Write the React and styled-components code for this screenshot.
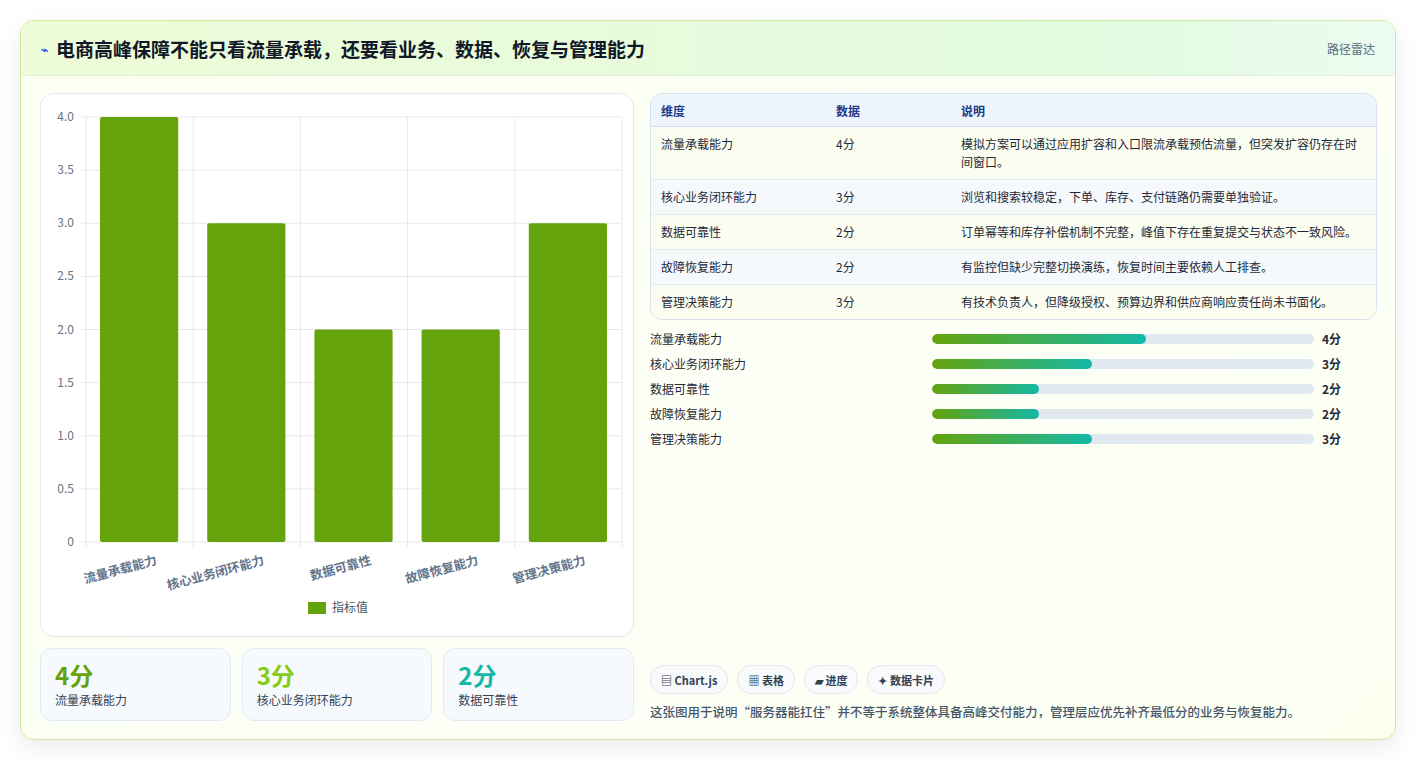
import React from "react";
import styled, { createGlobalStyle } from "styled-components";

const Global = createGlobalStyle`
  body { margin: 0; background: #f1f2f3; font-family: "Noto Sans CJK SC", "Noto Sans", sans-serif; }
`;

const Page = styled.div`
  width: 1417px; height: 760px; padding: 20px; box-sizing: border-box;
  background: #fff;
`;

const Card = styled.div`
  width: 1376px; height: 720px; box-sizing: border-box;
  border: 1px solid #cfe9a0; border-radius: 14px; overflow: hidden;
  background: linear-gradient(135deg, #fbfff2, #fdfff6 60%, #fbfff0);
  box-shadow: 0 8px 24px rgba(0,0,0,0.08);
  display: flex; flex-direction: column;
`;

const Header = styled.div`
  height: 55px; flex: none; box-sizing: border-box; padding: 0 20px;
  display: flex; align-items: center; justify-content: space-between;
  background: linear-gradient(90deg, #eefcd8, #e2fbe0 80%, #eafcf0);
  border-bottom: 1px solid #e3f0d6;
`;

const Title = styled.h1`
  margin: 0; font-size: 19px; font-weight: 700; color: #111827;
  display: flex; align-items: center; gap: 8px;
`;

const Tag = styled.span` font-size: 12px; color: #5b6b7c; `;

const Body = styled.div`
  flex: 1; display: grid; grid-template-columns: 594px 1fr; gap: 16px;
  padding: 17px 18px 18px 19px;
`;

const Col = styled.div` display: flex; flex-direction: column; gap: 11px; min-height: 0; `;

const ChartBox = styled.div`
  height: 544px; box-sizing: border-box; background: #fff;
  border: 1px solid #e5e9ef; border-radius: 14px;
`;

const Stats = styled.div` display: grid; grid-template-columns: repeat(3, 1fr); gap: 11px; `;

const Stat = styled.div`
  height: 73px; box-sizing: border-box; padding: 12px 14px;
  background: #f7fafd; border: 1px solid #e3e9f1; border-radius: 12px;
`;

const StatNum = styled.div` font-size: 24px; font-weight: 700; color: ${p => p.c}; line-height: 28px; `;
const StatLabel = styled.div` font-size: 12px; color: #374151; margin-top: 2px; `;

const Table = styled.table`
  width: 100%; border-collapse: separate; border-spacing: 0; font-size: 12px; color: #1f2937;
  border: 1px solid #d7e2ee; border-radius: 12px; overflow: hidden;
  th { background: #eef5fc; color: #1e3a8a; font-weight: 600; text-align: left; height: 32px; padding: 0 10px; border-bottom: 1px solid #cfdbe8; }
  td { padding: 8px 10px; line-height: 18px; border-bottom: 1px solid #e6ebf0; vertical-align: top; }
  tr:nth-child(odd) td { background: #fafdf0; }
  tr:nth-child(even) td { background: #f6f9fb; }
  tr:last-child td { border-bottom: none; }
`;

const Bars = styled.div` display: flex; flex-direction: column; gap: 6px; margin-top: -2px; `;
const BarRow = styled.div`
  display: grid; grid-template-columns: 274px 382px 1fr; align-items: center; gap: 8px;
  font-size: 12px; color: #1f2937; height: 19px;
`;
const Track = styled.div` height: 10px; border-radius: 5px; background: #e2e8f0; overflow: hidden; `;
const Fill = styled.div` height: 100%; border-radius: 5px; background: linear-gradient(90deg, #65a30d, #14b8a6); `;
const Score = styled.span` font-weight: 700; `;

const Spacer = styled.div` flex: 1; `;
const Chips = styled.div` display: flex; gap: 9px; `;
const Chip = styled.span`
  height: 27px; padding: 0 10px; display: flex; align-items: center; gap: 4px;
  border: 1px solid #e3e8ee; border-radius: 14px; background: #f8fafc;
  font-size: 11px; font-weight: 700; color: #334155;
`;
const Note = styled.p` margin: 8px 0 0; font-size: 12.5px; color: #475569; font-weight: 500; `;

const data = [
  ["流量承载能力", 4, "模拟方案可以通过应用扩容和入口限流承载预估流量，但突发扩容仍存在时间窗口。"],
  ["核心业务闭环能力", 3, "浏览和搜索较稳定，下单、库存、支付链路仍需要单独验证。"],
  ["数据可靠性", 2, "订单幂等和库存补偿机制不完整，峰值下存在重复提交与状态不一致风险。"],
  ["故障恢复能力", 2, "有监控但缺少完整切换演练，恢复时间主要依赖人工排查。"],
  ["管理决策能力", 3, "有技术负责人，但降级授权、预算边界和供应商响应责任尚未书面化。"],
];

function Chart() {
  const x0 = 45, x1 = 581, y0 = 448, yTop = 23;
  const h = (y0 - yTop) / 8;
  const w = (x1 - x0) / 5;
  return (
    <svg width="594" height="544" style={{ display: "block" }} fontFamily="'Noto Sans CJK SC', sans-serif">
      {Array.from({ length: 9 }, (_, i) => {
        const y = y0 - i * h;
        return (
          <g key={i}>
            <line x1={x0 - 5} x2={x1} y1={y} y2={y} stroke="#e5e7eb" />
            <text x={x0 - 12} y={y + 4} fontSize="12" fill="#6b7280" textAnchor="end">{i === 0 ? "0" : (i / 2).toFixed(1)}</text>
          </g>
        );
      })}
      {Array.from({ length: 6 }, (_, i) => (
        <line key={i} x1={x0 + i * w} x2={x0 + i * w} y1={yTop} y2={y0 + 5} stroke="#e5e7eb" />
      ))}
      {data.map(([n, v], i) => (
        <g key={n}>
          <rect x={x0 + i * w + 14} y={y0 - v * 2 * h} width={w - 29} height={v * 2 * h} fill="#65a30d" rx="2" />
          <text transform={`translate(${x0 + i * w + w / 2 + 18},${y0 + 22}) rotate(-15)`} fontSize="12.5" fontWeight="600" fill="#64748b" textAnchor="end">{n}</text>
        </g>
      ))}
      <rect x="267" y="508" width="18" height="12" fill="#65a30d" />
      <text x="291" y="518" fontSize="12" fill="#4b5563">指标值</text>
    </svg>
  );
}

export default function App() {
  return (
    <Page>
      <Global />
      <Card>
        <Header>
          <Title><span style={{ fontSize: 12, color: "#2563eb" }}>⌁</span>电商高峰保障不能只看流量承载，还要看业务、数据、恢复与管理能力</Title>
          <Tag>路径雷达</Tag>
        </Header>
        <Body>
          <Col>
            <ChartBox><Chart /></ChartBox>
            <Stats>
              <Stat><StatNum c="#65a30d">4分</StatNum><StatLabel>流量承载能力</StatLabel></Stat>
              <Stat><StatNum c="#84cc16">3分</StatNum><StatLabel>核心业务闭环能力</StatLabel></Stat>
              <Stat><StatNum c="#14b8a6">2分</StatNum><StatLabel>数据可靠性</StatLabel></Stat>
            </Stats>
          </Col>
          <Col>
            <Table>
              <thead><tr><th style={{ width: 155 }}>维度</th><th style={{ width: 105 }}>数据</th><th>说明</th></tr></thead>
              <tbody>
                {data.map(([n, v, d]) => (
                  <tr key={n}><td>{n}</td><td>{v}分</td><td>{d}</td></tr>
                ))}
              </tbody>
            </Table>
            <Bars>
              {data.map(([n, v]) => (
                <BarRow key={n}>
                  <span>{n}</span>
                  <Track><Fill style={{ width: `${v * 14}%` }} /></Track>
                  <Score>{v}分</Score>
                </BarRow>
              ))}
            </Bars>
            <Spacer />
            <div>
              <Chips>
                <Chip>▤ Chart.js</Chip>
                <Chip>▦ 表格</Chip>
                <Chip>▰ 进度</Chip>
                <Chip>✦ 数据卡片</Chip>
              </Chips>
              <Note>这张图用于说明“服务器能扛住”并不等于系统整体具备高峰交付能力，管理层应优先补齐最低分的业务与恢复能力。</Note>
            </div>
          </Col>
        </Body>
      </Card>
    </Page>
  );
}
